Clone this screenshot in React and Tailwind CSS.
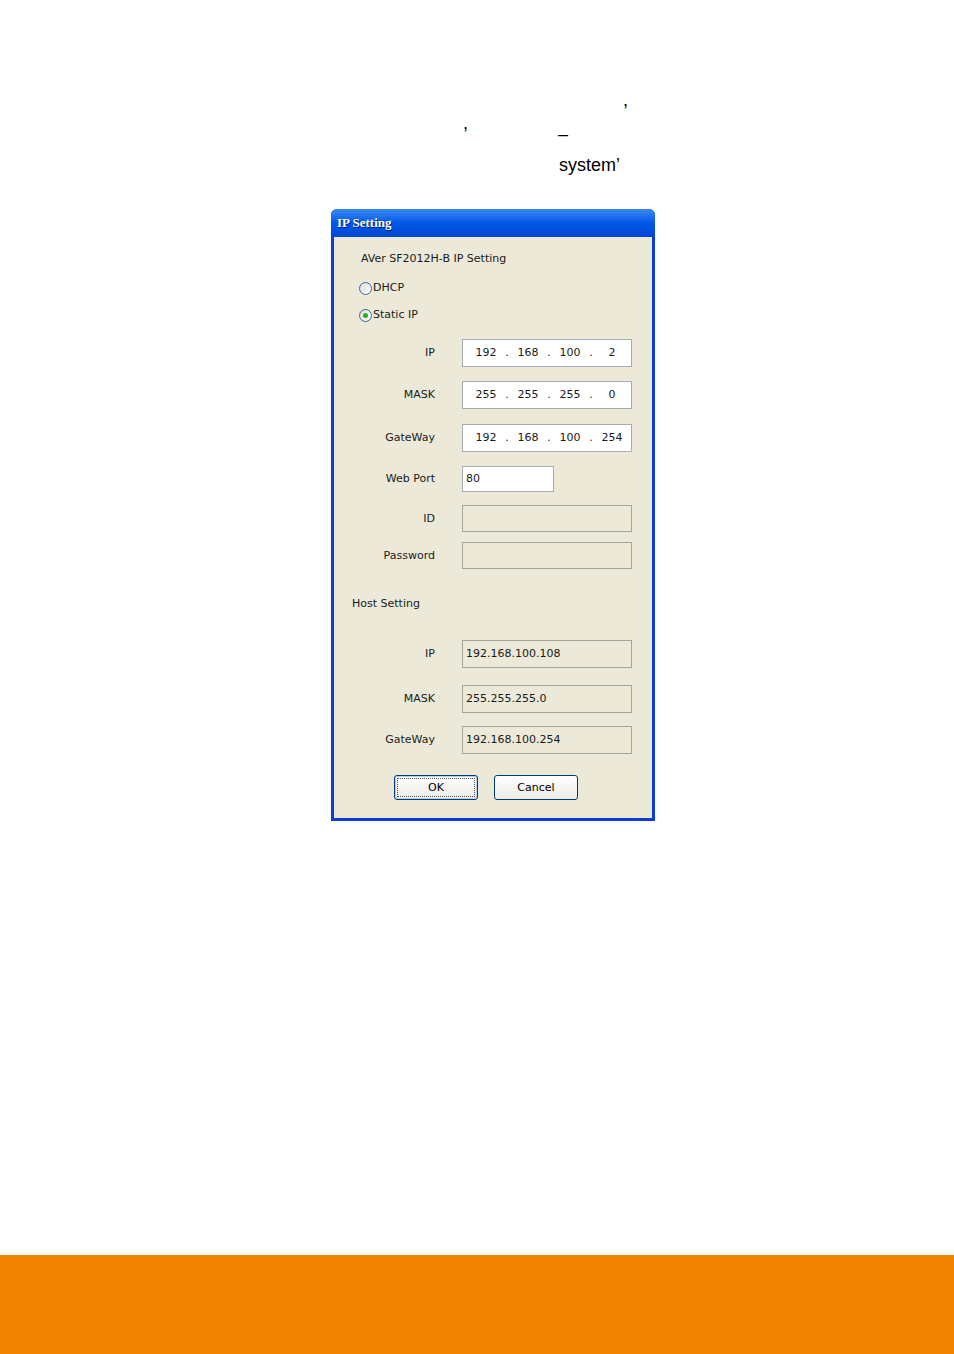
import React from 'react'

const ui = { fontFamily: '"DejaVu Sans", "Liberation Sans", sans-serif' }

function Radio({ checked, label }) {
  return (
    <div className="flex items-center h-[14px]">
      <span className="w-[13px] h-[13px] rounded-full border border-[#3d6a94] bg-gradient-to-br from-[#dcdcd6] to-white flex items-center justify-center">
        {checked ? <span className="w-[5px] h-[5px] rounded-full bg-[#2fa82f]" /> : null}
      </span>
      <span className="ml-[1px]">{label}</span>
    </div>
  )
}

function Row({ label, top, height = 28, children }) {
  return (
    <div className="flex items-center" style={{ marginTop: top }}>
      <div className="w-[101px] text-right">{label}</div>
      <div className="ml-[27px]" style={{ height }}>
        {children}
      </div>
    </div>
  )
}

function IpBox({ parts }) {
  return (
    <div className="w-[170px] h-full bg-white border border-[#a5acb5] flex items-center pl-[6px]">
      {parts.map((p, i) => (
        <React.Fragment key={i}>
          <span className="w-[34px] text-center">{p}</span>
          {i < 3 ? <span className="w-[8px] text-center">.</span> : null}
        </React.Fragment>
      ))}
    </div>
  )
}

function TextBox({ value, width = 170, disabled }) {
  return (
    <div
      className={`h-full border flex items-center pl-[3px] ${disabled ? 'bg-[#ece9d8] border-[#a5a5a0]' : 'bg-white border-[#a5acb5]'}`}
      style={{ width }}
    >
      {value}
    </div>
  )
}

function XpButton({ children, focused }) {
  return (
    <button
      className={`w-[84px] h-[25px] rounded-[3px] border border-[#003c74] bg-gradient-to-b from-white to-[#ecebe6] text-[11px] text-black flex items-center justify-center ${focused ? 'shadow-[inset_0_0_0_1px_#b8d2f4]' : ''}`}
      style={ui}
    >
      <span className={`flex items-center justify-center w-[76px] h-[17px] ${focused ? 'outline-1 outline-dotted outline-[#555]' : ''}`}>
        {children}
      </span>
    </button>
  )
}

export default function App() {
  return (
    <div className="w-[954px] h-[1354px] bg-white flex flex-col" style={{ fontFamily: '"Liberation Sans", Arial, sans-serif' }}>
      <div className="pt-[89px] h-[209px] text-[18px] text-black">
        <div className="h-[23px] leading-[23px] pl-[623px]">,</div>
        <div className="h-[23px] leading-[23px] pl-[463px] flex">
          <span>,</span>
          <span className="relative top-[11px] ml-[90px]">–</span>
        </div>
        <div className="h-[23px] leading-[23px] pl-[559px] mt-[19px]">system’</div>
      </div>

      <div className="ml-[331px] w-[324px] h-[612px] flex flex-col rounded-t-[6px] overflow-hidden bg-[#0a3ed8]">
        <div className="h-[28px] shrink-0 flex items-center pl-[6px] bg-gradient-to-b from-[#3a88f5] via-[#0058e6] to-[#0046d4]">
          <span className="text-white font-bold text-[13px] [text-shadow:1px_1px_0_#0a1e6e]" style={{ fontFamily: '"Liberation Serif", serif' }}>
            IP Setting
          </span>
        </div>
        <div className="mx-[3px] mb-[3px] h-[581px] bg-[#ece9d8] text-[11px] text-[#1a1a1a] leading-[14px] flex flex-col" style={ui}>
          <div className="mt-[15px] pl-[27px] h-[14px]">AVer SF2012H-B IP Setting</div>
          <div className="mt-[15px] pl-[25px]"><Radio label="DHCP" /></div>
          <div className="mt-[13px] pl-[25px]"><Radio checked label="Static IP" /></div>

          <Row label="IP" top={17}><IpBox parts={['192', '168', '100', '2']} /></Row>
          <Row label="MASK" top={14}><IpBox parts={['255', '255', '255', '0']} /></Row>
          <Row label="GateWay" top={15}><IpBox parts={['192', '168', '100', '254']} /></Row>
          <Row label="Web Port" top={14} height={26}><TextBox value="80" width={92} /></Row>
          <Row label="ID" top={13} height={27}><TextBox value="" disabled /></Row>
          <Row label="Password" top={10} height={27}><TextBox value="" disabled /></Row>

          <div className="mt-[28px] pl-[18px] h-[14px]">Host Setting</div>

          <Row label="IP" top={29}><TextBox value="192.168.100.108" disabled /></Row>
          <Row label="MASK" top={17}><TextBox value="255.255.255.0" disabled /></Row>
          <Row label="GateWay" top={13}><TextBox value="192.168.100.254" disabled /></Row>

          <div className="mt-[21px] pl-[60px] flex gap-[16px]">
            <XpButton focused>OK</XpButton>
            <XpButton>Cancel</XpButton>
          </div>
        </div>
      </div>

      <div className="mt-auto h-[99px] bg-[#f08300]" />
    </div>
  )
}
